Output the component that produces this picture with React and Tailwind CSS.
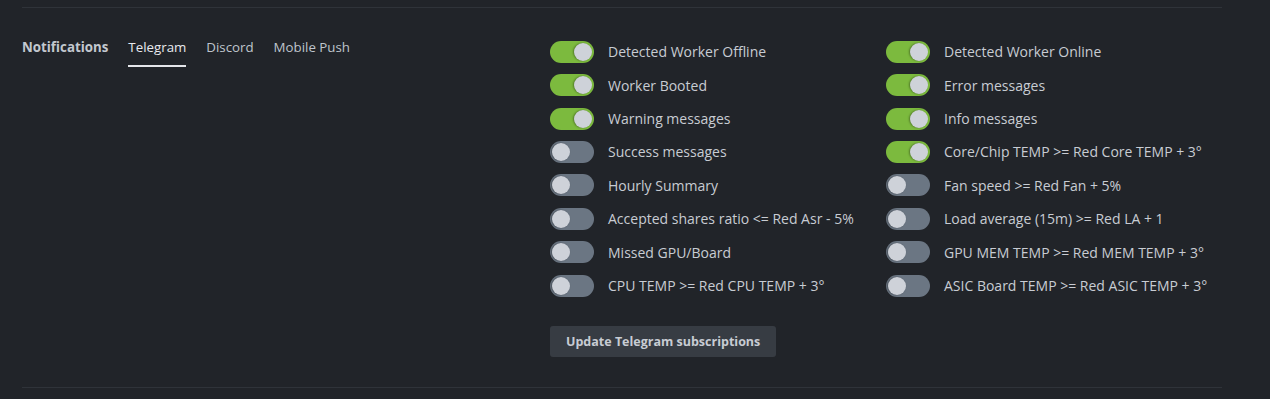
import { useState } from 'react';

const LEFT = [
  ['Detected Worker Offline', true],
  ['Worker Booted', true],
  ['Warning messages', true],
  ['Success messages', false],
  ['Hourly Summary', false],
  ['Accepted shares ratio <= Red Asr - 5%', false],
  ['Missed GPU/Board', false],
  ['CPU TEMP >= Red CPU TEMP + 3°', false],
];

const RIGHT = [
  ['Detected Worker Online', true],
  ['Error messages', true],
  ['Info messages', true],
  ['Core/Chip TEMP >= Red Core TEMP + 3°', true],
  ['Fan speed >= Red Fan + 5%', false],
  ['Load average (15m) >= Red LA + 1', false],
  ['GPU MEM TEMP >= Red MEM TEMP + 3°', false],
  ['ASIC Board TEMP >= Red ASIC TEMP + 3°', false],
];

function Toggle({ on, onClick }) {
  return (
    <button
      type="button"
      onClick={onClick}
      className={`relative flex h-[22px] w-[44px] shrink-0 items-center rounded-full px-[2px] ${
        on ? 'justify-end bg-[#7cba3e]' : 'justify-start bg-[#6b7683]'
      }`}
    >
      <span className="h-[18px] w-[18px] rounded-full bg-[#ced2d9] shadow-[-1px_0_2px_rgba(0,0,0,0.35)]" />
    </button>
  );
}

function Column({ items }) {
  const [state, setState] = useState(items.map((i) => i[1]));
  return (
    <div className="flex w-[336px] flex-col">
      {items.map(([label], i) => (
        <div key={label} className="flex h-[33.43px] items-center gap-[14px]">
          <Toggle
            on={state[i]}
            onClick={() => setState(state.map((v, j) => (j === i ? !v : v)))}
          />
          <span className="whitespace-nowrap text-[14px] text-[#c8ccd3]">{label}</span>
        </div>
      ))}
    </div>
  );
}

export default function App() {
  return (
    <div className="h-[399px] w-[1270px] overflow-hidden bg-[#212429] px-[22px] pt-[7px] font-['Open_Sans',sans-serif]">
      <div className="w-[1200px] border-t border-[#2f3339]" />

      <div className="flex pt-[27px]">
        {/* Left: tabs */}
        <div className="flex w-[528px] items-start gap-[20px] pt-[3px] text-[13.3px]">
          <span className="font-bold text-[#c3c8cf]">Notifications</span>
          <span className="border-b-2 border-[#e4e6ea] pb-[7px] text-[#e8eaee]">Telegram</span>
          <span className="text-[#bfc4cc]">Discord</span>
          <span className="text-[#bfc4cc]">Mobile Push</span>
        </div>

        {/* Right: toggles */}
        <div className="flex flex-col">
          <div className="flex">
            <Column items={LEFT} />
            <Column items={RIGHT} />
          </div>
          <div className="pt-[24px]">
            <button
              type="button"
              className="h-[31px] rounded-[3px] bg-[#373c43] px-[16px] text-[12.5px] font-bold text-[#c8ccd3]"
            >
              Update Telegram subscriptions
            </button>
          </div>
        </div>
      </div>

      <div className="mt-[30px] w-[1200px] border-t border-[#2f3339]" />
    </div>
  );
}
